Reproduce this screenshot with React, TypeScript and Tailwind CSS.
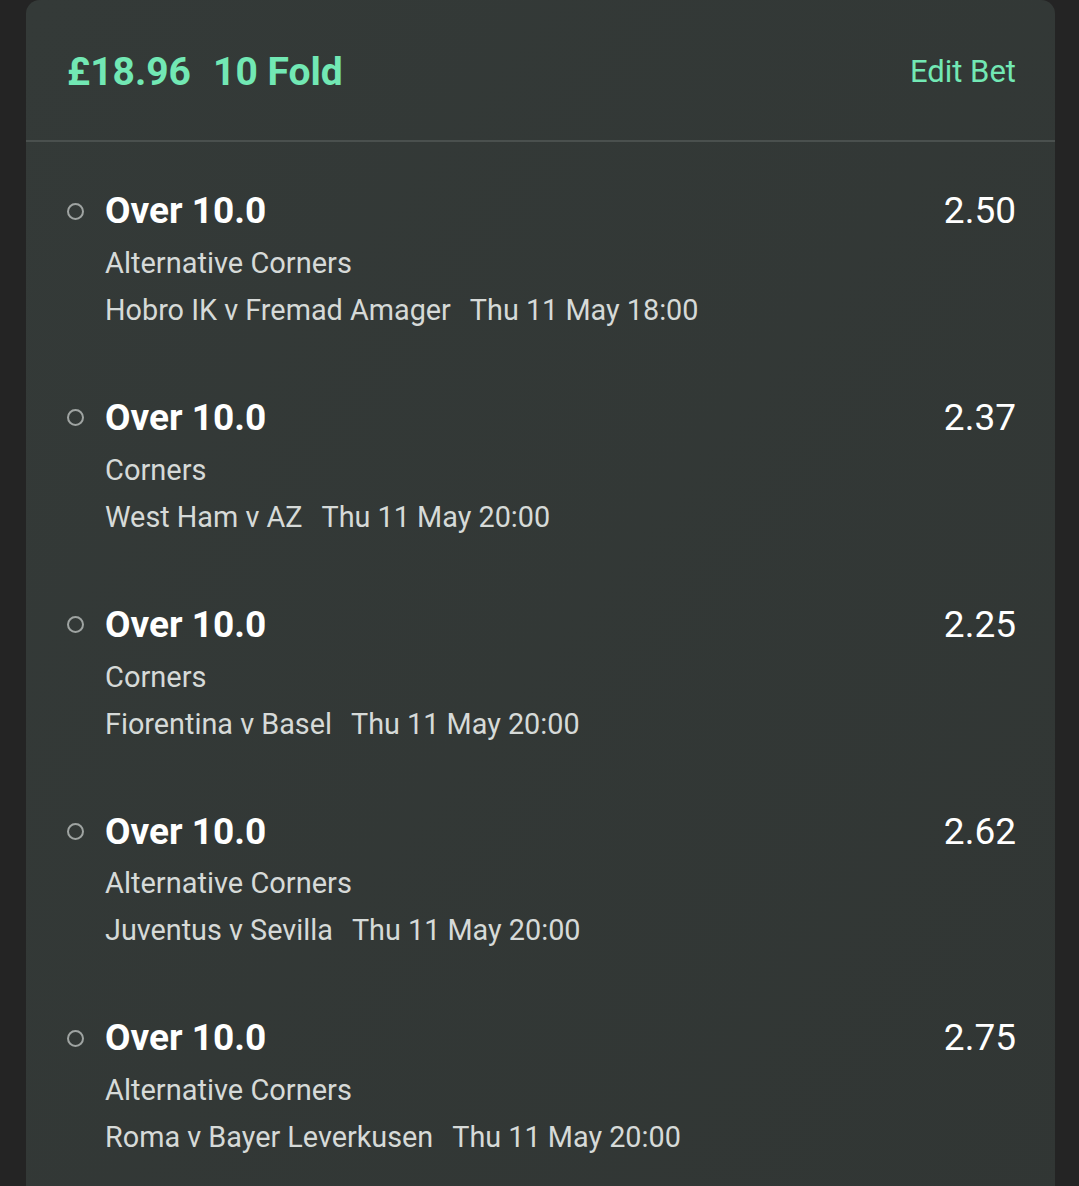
const legs = [
  { odds: "2.50", market: "Alternative Corners", match: "Hobro IK v Fremad Amager", time: "Thu 11 May 18:00" },
  { odds: "2.37", market: "Corners", match: "West Ham v AZ", time: "Thu 11 May 20:00" },
  { odds: "2.25", market: "Corners", match: "Fiorentina v Basel", time: "Thu 11 May 20:00" },
  { odds: "2.62", market: "Alternative Corners", match: "Juventus v Sevilla", time: "Thu 11 May 20:00" },
  { odds: "2.75", market: "Alternative Corners", match: "Roma v Bayer Leverkusen", time: "Thu 11 May 20:00" },
];

export default function App() {
  return (
    <div className="h-[1186px] w-[1079px] overflow-hidden bg-[#242424] pl-[26px] pr-[24px] font-['Roboto',sans-serif]">
      <div className="h-[1300px] rounded-t-[14px] bg-gradient-to-br from-[#343a38] to-[#313634]">
        <div className="flex h-[142px] items-center justify-between border-b-2 border-[#4a504e] pt-[4px] pl-[41px] pr-[39px]">
          <div className="text-[39px] font-bold text-[#72e8b4]">
            £18.96<span className="ml-[22px]">10 Fold</span>
          </div>
          <div className="text-[31px] text-[#72e8b4]">Edit Bet</div>
        </div>

        <div className="flex flex-col gap-[70.75px] pt-[48px] pl-[41px] pr-[39px]">
          {legs.map((l, i) => (
            <div key={i} className="flex">
              <div className="flex h-[40px] w-[38px] shrink-0 items-center pt-[2px]">
                <span className="block h-[17px] w-[17px] rounded-full border-2 border-[#9fa4a2]" />
              </div>
              <div className="flex-1">
                <div className="flex h-[40px] items-center justify-between pt-[2px]">
                  <span className="text-[37px] font-bold text-white">Over 10.0</span>
                  <span className="text-[37px] text-white">{l.odds}</span>
                </div>
                <div className="mt-[17px] text-[29px] leading-[32px] text-[#d6dad8]">{l.market}</div>
                <div className="mt-[15px] text-[28.8px] leading-[32px] text-[#d6dad8]">
                  {l.match}
                  <span className="ml-[19px]">{l.time}</span>
                </div>
              </div>
            </div>
          ))}
        </div>
      </div>
    </div>
  );
}
